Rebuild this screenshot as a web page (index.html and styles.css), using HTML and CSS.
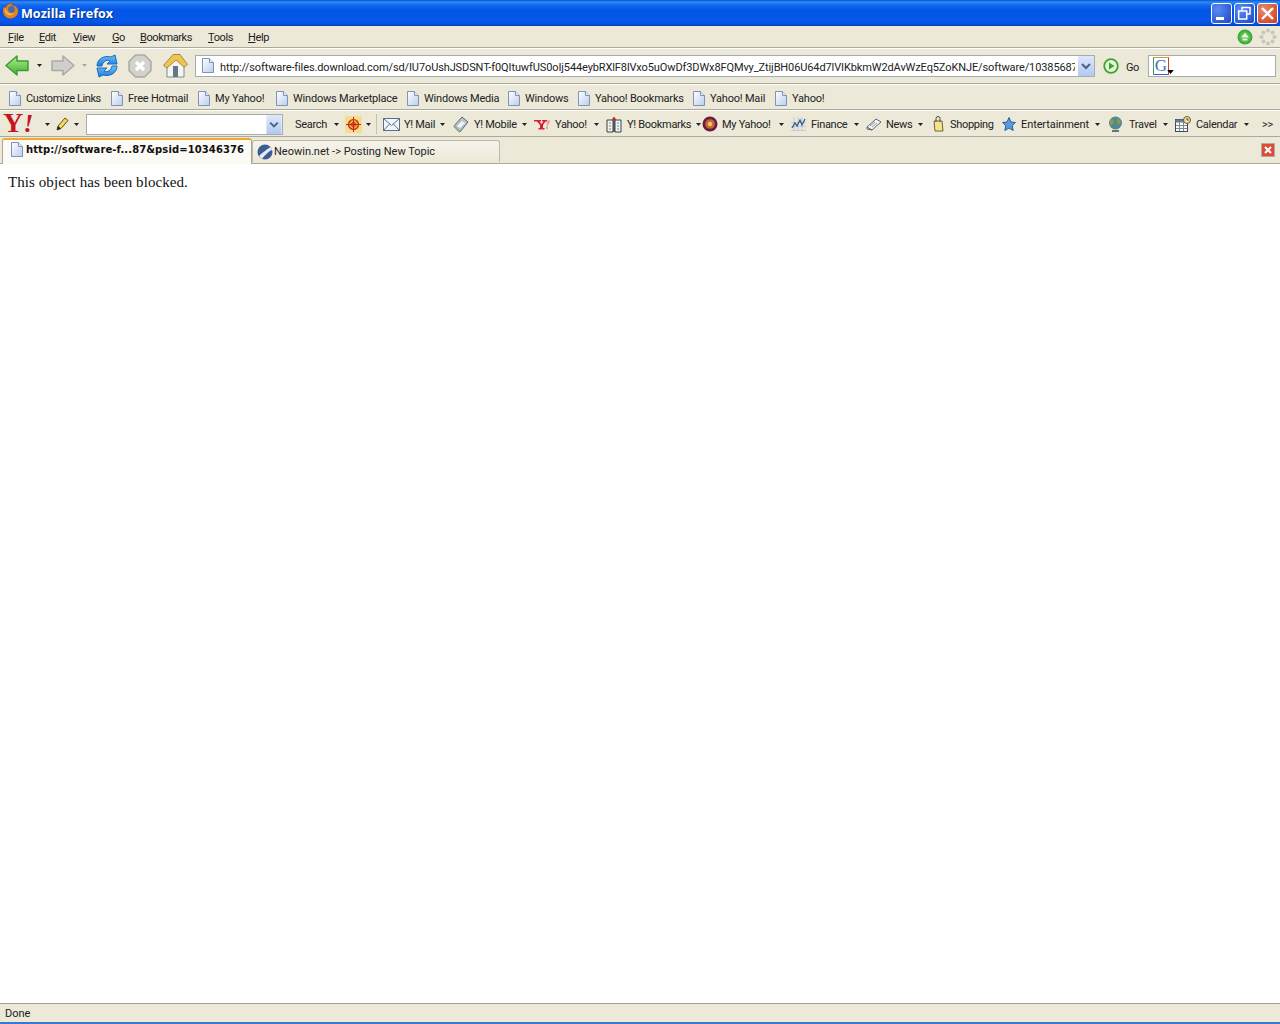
FILE: index.html
```html
<!DOCTYPE html>
<html lang="en">
<head>
<meta charset="utf-8">
<title>Mozilla Firefox</title>
<link rel="stylesheet" href="styles.css">
</head>
<body>
<svg class="defs" width="0" height="0" aria-hidden="true">
  <defs>
    <linearGradient id="pageFill" x1="0" y1="0" x2="1" y2="1"><stop offset="0" stop-color="#fff"/><stop offset="1" stop-color="#bccdec"/></linearGradient>
    <linearGradient id="combo" x1="0" y1="0" x2="0" y2="1"><stop offset="0" stop-color="#dfe8fb"/><stop offset="1" stop-color="#b3c8f0"/></linearGradient>
    <linearGradient id="backFill" x1="0" y1="0" x2="0" y2="1"><stop offset="0" stop-color="#b5f08f"/><stop offset="1" stop-color="#3cb02c"/></linearGradient>
    <linearGradient id="reloadFill" x1="0" y1="0" x2="0" y2="1"><stop offset="0" stop-color="#6cc4fa"/><stop offset="1" stop-color="#1f78d8"/></linearGradient>
    <symbol id="page" viewBox="0 0 13 15">
      <path d="M1.500.5h7l4 4v10h-11z" fill="url(#pageFill)" stroke="#7e93b8"/>
      <path d="M8.500.5v4h4" fill="#e8effb" stroke="#7e93b8"/>
    </symbol>
    <symbol id="caret" viewBox="0 0 5 3"><path d="M0 0h5L2.500 3z"/></symbol>
    <symbol id="combobtn" viewBox="0 0 16 20">
      <rect width="16" height="20" fill="url(#combo)"/>
      <path d="M4 8l4 4 4-4" fill="none" stroke="#4d6185" stroke-width="2"/>
    </symbol>
  </defs>
</svg>

<header class="titlebar">
  <svg class="ff-logo" width="18" height="18" viewBox="0 0 18 18">
    <circle cx="9" cy="8.500" r="7.500" fill="#3d5fa8"/>
    <path d="M2 5c1 1 1.500 1 2 .5C5 2.500 8 1 11 1.500 9.500 2 9 3 9.500 3.500c3-.5 6 1.500 6.500 5 .5 4-3 8-7.500 8C4.500 16.500 1 13 1 9c0-1.500.3-3 1-4z" fill="#e8801c"/>
    <circle cx="9.500" cy="7.500" r="3.400" fill="#4a6ab0"/>
    <path d="M3 6c1 4 4 6 9 5-1 2-4 3-6 2-2-1-4-4-3-7z" fill="#f6b43c"/>
  </svg>
  <span class="title-text">Mozilla Firefox</span>
  <div class="window-buttons">
    <span class="win-btn">
      <svg width="21" height="21" viewBox="0 0 21 21"><rect x="5" y="14" width="8" height="3" fill="#fff"/></svg>
    </span>
    <span class="win-btn">
      <svg width="21" height="21" viewBox="0 0 21 21"><path d="M8 7V4.500h8V11h-3" fill="none" stroke="#fff" stroke-width="1.500"/><rect x="4.700" y="8" width="8" height="8" fill="none" stroke="#fff" stroke-width="1.500"/></svg>
    </span>
    <span class="win-btn win-close">
      <svg width="21" height="21" viewBox="0 0 21 21"><path d="M5 5l11 11M16 5L5 16" stroke="#fff" stroke-width="2.400"/></svg>
    </span>
  </div>
</header>

<nav class="menubar bar">
  <span class="menu-item"><u>F</u>ile</span>
  <span class="menu-item"><u>E</u>dit</span>
  <span class="menu-item"><u>V</u>iew</span>
  <span class="menu-item"><u>G</u>o</span>
  <span class="menu-item"><u>B</u>ookmarks</span>
  <span class="menu-item"><u>T</u>ools</span>
  <span class="menu-item"><u>H</u>elp</span>
  <svg class="update-icon" width="16" height="16" viewBox="0 0 16 16">
    <circle cx="8" cy="8" r="7.500" fill="#3fa83a"/><circle cx="8" cy="8" r="5.800" fill="#52bd48"/>
    <path d="M8 3.500l4 5H4z" fill="#e6f6df"/><rect x="5.500" y="9.500" width="5" height="2" fill="#e6f6df"/>
  </svg>
  <svg class="throbber" width="18" height="18" viewBox="0 0 18 18" fill="#c6c6c0">
    <circle cx="9" cy="2.500" r="2"/><circle cx="13.600" cy="4.400" r="2"/><circle cx="15.500" cy="9" r="2"/><circle cx="13.600" cy="13.600" r="2"/><circle cx="9" cy="15.500" r="2"/><circle cx="4.400" cy="13.600" r="2"/><circle cx="2.500" cy="9" r="2"/><circle cx="4.400" cy="4.400" r="2"/>
  </svg>
</nav>

<div class="navbar bar">
  <svg class="nav-back" width="24" height="24" viewBox="0 0 24 24"><path d="M1 11.500L12 2v5h11v9.500H12V21z" fill="url(#backFill)" stroke="#3f9a38" stroke-width="1.500" stroke-linejoin="round"/></svg>
  <svg class="caret nav-caret1" width="5" height="3"><use href="#caret"/></svg>
  <svg class="nav-forward" width="24" height="24" viewBox="0 0 24 24"><path d="M23 11.500L12 2v5H1v9.500h11V21z" fill="#cfcfcb" stroke="#a9a9a5" stroke-width="1.500" stroke-linejoin="round"/></svg>
  <svg class="caret caret-gray nav-caret2" width="5" height="3"><use href="#caret"/></svg>
  <svg class="nav-reload" width="24" height="24" viewBox="0 0 24 24">
    <path d="M2 12C2 5 9 1 16 3l4-2 2 9H12l3-3c-4-2-7 1-8 5z" fill="url(#reloadFill)" stroke="#1a68c0"/>
    <path d="M22 12c0 7-7 11-14 9l-4 2-2-9h10l-3 3c4 2 7-1 8-5z" fill="url(#reloadFill)" stroke="#1a68c0"/>
  </svg>
  <svg class="nav-stop" width="24" height="24" viewBox="0 0 24 24"><path d="M7.500 1h9L23 7.500v9L16.500 23h-9L1 16.500v-9z" fill="#d2d2ce" stroke="#aaa9a5" stroke-width="1.500"/><path d="M8 8l8 8M16 8l-8 8" stroke="#fff" stroke-width="3.200"/></svg>
  <svg class="nav-home" width="25" height="25" viewBox="0 0 25 25">
    <path d="M4 12l8-7 9 7v12H4z" fill="#f6f5ee" stroke="#7d8797"/>
    <path d="M.5 12.500L10 1.500h7l7.500 10L21 14l-8-7-9 8z" fill="#f0c450" stroke="#8c7a3a" stroke-width=".8"/>
    <rect x="10" y="13" width="5" height="11" fill="#66758e"/>
  </svg>
  <div class="url-box">
    <svg class="page-icon" width="13" height="15"><use href="#page"/></svg>
    <span class="url-text">http://software-files.download.com/sd/IU7oUshJSDSNT-f0QItuwfUS0oIj544eybRXlF8lVxo5uOwDf3DWx8FQMvy_ZtijBH06U64d7lVIKbkmW2dAvWzEq5ZoKNJE/software/10385687</span>
    <svg class="combo-btn" width="16" height="20"><use href="#combobtn"/></svg>
  </div>
  <svg class="go-icon" width="16" height="16" viewBox="0 0 16 16"><circle cx="8" cy="8" r="6.800" fill="#e6f6da" stroke="#3fa32f" stroke-width="1.800"/><path d="M6 4.500L11.500 8 6 11.500z" fill="#3fa32f"/></svg>
  <span class="go-text">Go</span>
  <div class="search-box">
    <span class="g-logo">G</span>
    <svg class="g-caret" width="7" height="4" viewBox="0 0 5 3"><path d="M0 0h5L2.500 3z"/></svg>
  </div>
</div>

<div class="linksbar bar">
  <span class="link-item link-tight"><svg width="13" height="15"><use href="#page"/></svg>Customize Links</span>
  <span class="link-item"><svg width="13" height="15"><use href="#page"/></svg>Free Hotmail</span>
  <span class="link-item"><svg width="13" height="15"><use href="#page"/></svg>My Yahoo!</span>
  <span class="link-item"><svg width="13" height="15"><use href="#page"/></svg>Windows Marketplace</span>
  <span class="link-item"><svg width="13" height="15"><use href="#page"/></svg>Windows Media</span>
  <span class="link-item"><svg width="13" height="15"><use href="#page"/></svg>Windows</span>
  <span class="link-item"><svg width="13" height="15"><use href="#page"/></svg>Yahoo! Bookmarks</span>
  <span class="link-item"><svg width="13" height="15"><use href="#page"/></svg>Yahoo! Mail</span>
  <span class="link-item"><svg width="13" height="15"><use href="#page"/></svg>Yahoo!</span>
</div>

<div class="yahoobar bar">
  <span class="y-logo">Y<i>!</i></span>
  <svg class="caret yc-1" width="5" height="3"><use href="#caret"/></svg>
  <svg class="y-pencil" width="13" height="14" viewBox="0 0 13 14"><path d="M1 13l1-4 7-8 3 2.500-7 8z" fill="#f4d84e" stroke="#55503a"/><path d="M1 13l1-4 3 2.500z" fill="#222"/></svg>
  <svg class="caret yc-2" width="5" height="3"><use href="#caret"/></svg>
  <div class="y-input"><svg class="combo-btn" width="16" height="19"><use href="#combobtn"/></svg></div>
  <span class="y-item y-search">Search<svg class="caret" width="5" height="3"><use href="#caret"/></svg></span>
  <svg class="y-target" width="17" height="17" viewBox="0 0 17 17"><rect width="17" height="17" fill="#f6dc8e"/><circle cx="8.500" cy="8.500" r="5" fill="#f4a53a" stroke="#c22818" stroke-width="1.200"/><circle cx="8.500" cy="8.500" r="2" fill="none" stroke="#c22818"/><path d="M8.500 1v15M1 8.500h15" stroke="#c22818"/></svg>
  <svg class="caret yc-3" width="5" height="3"><use href="#caret"/></svg>
  <span class="y-sep"></span>
  <span class="y-item i-mail">
    <svg width="17" height="13" viewBox="0 0 17 13"><rect x=".5" y=".5" width="16" height="12" fill="#f2f6fb" stroke="#59708f"/><path d="M.5.500l8 7 8-7M.5 12.500l6-6.500M16.500 12.500l-6-6.500" fill="none" stroke="#59708f"/></svg>
    Y! Mail<svg class="caret" width="5" height="3"><use href="#caret"/></svg></span>
  <span class="y-item i-mobile">
    <svg width="16" height="17" viewBox="0 0 16 17"><path d="M1 10l8-9 6 5-8 10z" fill="#b9c2cc" stroke="#5c6672"/><path d="M4 10l5-5 3 2-5 5z" fill="#eef3f8"/><path d="M1 10l6 6" stroke="#8fa88a" stroke-width="2"/></svg>
    Y! Mobile<svg class="caret" width="5" height="3"><use href="#caret"/></svg></span>
  <span class="y-item i-yahoo">
    <svg width="17" height="11" viewBox="0 0 17 11"><path d="M0 1h7v1.500H5.500L7.500 5 9.500 2.500H8V1h5v1.500h-1.500L9 6v3h1.500v1.500h-6V9H6V6L3 2.500H0z" fill="#d8202c"/><path d="M13 1.500h3.500L14 6.500h-1.500zM12 7.500h2v2.500h-2z" fill="#e8a0a0"/></svg>
    Yahoo!<svg class="caret" width="5" height="3"><use href="#caret"/></svg></span>
  <span class="y-item i-book">
    <svg width="16" height="17" viewBox="0 0 16 17"><path d="M1 4h6v12H1zM9 4h6v12H9z" fill="#f2f2ea" stroke="#36424e"/><path d="M8 3v13" stroke="#36424e" stroke-width="1.500"/><path d="M5.500 4L8 .5 10.500 4z" fill="#c03020"/><path d="M3 7h2M3 10h2M3 13h2M11 7h2M11 10h2M11 13h2" stroke="#7e8a96"/></svg>
    Y! Bookmarks<svg class="caret" width="5" height="3"><use href="#caret"/></svg></span>
  <span class="y-item i-my">
    <svg width="16" height="16" viewBox="0 0 16 16"><circle cx="8" cy="8" r="7.500" fill="#6a1a44"/><circle cx="8" cy="8" r="4.800" fill="#c96a2c"/><circle cx="8" cy="8" r="2.200" fill="#f0c46a"/></svg>
    My Yahoo!<svg class="caret" width="5" height="3"><use href="#caret"/></svg></span>
  <span class="y-item i-finance">
    <svg width="15" height="14" viewBox="0 0 15 14"><path d="M0 13.500h15M0 9.500h15M0 5.500h15M3 0v14M7 0v14M11 0v14" stroke="#b7c7dc" stroke-width=".8"/><path d="M1 11l3-5 2 3 3-6 2 5 3-6" fill="none" stroke="#2e5a96" stroke-width="1.300"/></svg>
    Finance<svg class="caret" width="5" height="3"><use href="#caret"/></svg></span>
  <span class="y-item i-news">
    <svg width="16" height="13" viewBox="0 0 16 13"><path d="M1 9l9-8 5 3-9 8z" fill="#f5f5f2" stroke="#5c6672"/><path d="M4 8l5-4M6 9l5-4" stroke="#8b949c"/><path d="M1 9v2l5 1" fill="none" stroke="#5c6672"/></svg>
    News<svg class="caret" width="5" height="3"><use href="#caret"/></svg></span>
  <span class="y-item i-shop">
    <svg width="13" height="16" viewBox="0 0 13 16"><path d="M2 5h8l1 10H3z" fill="#f2e58a" stroke="#6a6538"/><path d="M4 6V2.500a2 2 0 0 1 4 0V6" fill="none" stroke="#4a4a3a"/></svg>
    Shopping</span>
  <span class="y-item i-star">
    <svg width="14" height="14" viewBox="0 0 14 14"><path d="M7 .5l2 4.500 4.500.5-3.300 3 1 5L7 11l-4.200 2.500 1-5-3.300-3L5 5z" fill="#5a9ae0" stroke="#2c5c9c"/></svg>
    Entertainment<svg class="caret" width="5" height="3"><use href="#caret"/></svg></span>
  <span class="y-item i-travel">
    <svg width="15" height="16" viewBox="0 0 15 16"><circle cx="7.500" cy="7" r="6.500" fill="#4f8a90"/><path d="M3 3c2 0 3 1 3 3s-2 1-3 4c-1-2-2-5 0-7zM9 2c2 1 4 3 4 5l-3 2-1-3z" fill="#8a9a50"/><path d="M4 15h7" stroke="#4a4a4a" stroke-width="1.500"/></svg>
    Travel<svg class="caret" width="5" height="3"><use href="#caret"/></svg></span>
  <span class="y-item i-cal">
    <svg width="16" height="16" viewBox="0 0 16 16"><rect x=".5" y="3.500" width="12" height="12" fill="#fbfbf6" stroke="#3d4a5c"/><rect x=".5" y="3.500" width="12" height="3" fill="#6a7c96"/><path d="M4.500 6v9M8.500 6v9M1 9.500h11M1 12.500h11" stroke="#7c8899"/><circle cx="12" cy="4" r="3.500" fill="#f0dfa0" stroke="#6a5a2c"/><path d="M12 2v2h2" fill="none" stroke="#333" stroke-width=".8"/></svg>
    Calendar<svg class="caret" width="5" height="3"><use href="#caret"/></svg></span>
  <span class="y-more">&gt;&gt;</span>
</div>

<div class="tabbar">
  <div class="tab tab-active"><svg width="13" height="15"><use href="#page"/></svg><span>http://software-f...87&amp;psid=10346376</span></div>
  <div class="tab tab-idle">
    <svg width="16" height="16" viewBox="0 0 16 16"><circle cx="8" cy="8" r="7.500" fill="#3c5c94"/><path d="M2 12C5 9 10 5 14 3c.5 1 1 2 1 3-3 1-7 5-10 9-1-.5-2-2-3-3z" fill="#e4ebf5"/></svg>
    <span>Neowin.net -&gt; Posting New Topic</span>
  </div>
  <span class="spring"></span>
  <span class="tab-close"><svg width="14" height="14" viewBox="0 0 14 14"><rect x=".5" y=".5" width="13" height="13" fill="#dc4c38" stroke="#b8a8a0"/><path d="M4 4l6 6M10 4l-6 6" stroke="#fff" stroke-width="2"/></svg></span>
</div>

<main class="content">
  <p class="blocked">This object has been blocked.</p>
</main>

<footer class="statusbar">Done</footer>
</body>
</html>
```

FILE: styles.css
```css
* { box-sizing: border-box; }
html, body { height: 100%; }
body {
  margin: 0;
  display: flex;
  flex-direction: column;
  overflow: hidden;
  background: #fff;
  color: #222;
  font: 11px Roboto, "Liberation Sans", sans-serif;
}
.defs { position: absolute; }
.spring { flex: 1; }
svg { display: block; flex: none; }

.titlebar {
  flex: none;
  height: 26px;
  display: flex;
  align-items: center;
  padding: 0 2px 0 2px;
  background: linear-gradient(#0a4fd0 0, #2d8cf5 2px, #1268ee 5px, #0456e6 10px, #0558ea 21px, #0350dc 24px, #0040c0 26px);
}
.ff-logo { margin-top: -4px; }
.title-text {
  margin-left: 1px;
  color: #fff;
  font: bold 12.6px "Open Sans", "Noto Sans", sans-serif;
  text-shadow: 1px 1px 1px #0a2f90;
}
.window-buttons { margin-left: auto; display: flex; gap: 2px; }
.win-btn {
  width: 21px;
  height: 21px;
  border: 1px solid #fff;
  border-radius: 3px;
  background: radial-gradient(circle at 30% 30%, #5c8cf0, #2c5cd8 70%, #2248c0);
  display: flex;
  align-items: center;
  justify-content: center;
}
.win-btn svg { margin: -1px; }
.win-close { background: radial-gradient(circle at 30% 30%, #e88a70, #d8512e 70%, #c03a20); }

.bar {
  flex: none;
  background: #ece9d8;
  border-bottom: 1px solid #aca899;
  box-shadow: inset 0 1px 0 #fff;
  align-items: center;
}

.menubar {
  display: grid;
  height: 22px;
  padding: 0 3px 0 8px;
  grid-template-columns: 31px 34px 39px 28px 68px 40px 1fr 22px 18px;
  box-shadow: none;
}
.menu-item { padding-top: 2px; letter-spacing: -.4px; }
.menu-item u { text-underline-offset: 1px; }
.update-icon { justify-self: start; grid-column: 8; }
.throbber { grid-column: 9; }

.navbar { display: flex; height: 36px; padding: 0 4px 0 5px; }
.caret { fill: #222; }
.caret-gray { fill: #aaa; }
.nav-caret1 { margin-left: 8px; }
.nav-forward { margin-left: 9px; }
.nav-caret2 { margin-left: 7px; }
.nav-reload { margin-left: 8px; }
.nav-stop { margin-left: 9px; }
.nav-home { margin-left: 11px; }
.url-box {
  flex: none;
  margin-left: 7px;
  width: 900px;
  height: 22px;
  display: flex;
  align-items: center;
  background: #fff;
  border: 1px solid #a5acb2;
  padding-left: 5px;
}
.url-text {
  padding-top: 3px;
  margin-left: 6px;
  width: 855px;
  white-space: nowrap;
  overflow: hidden;
  letter-spacing: -.11px;
}
.combo-btn { margin-left: auto; }
.go-icon { margin-left: 8px; }
.go-text { margin: 3px 0 0 7px; letter-spacing: -.4px; }
.search-box {
  position: relative;
  margin-left: auto;
  flex: none;
  width: 128px;
  height: 22px;
  background: #fff;
  border: 1px solid #a5acb2;
}
.g-logo {
  position: absolute;
  left: 4px;
  top: 1px;
  width: 16px;
  height: 18px;
  border: 1px solid #3a9a6a;
  border-top-color: #c8a040;
  border-right-color: #c84030;
  border-bottom-color: #3a62b0;
  text-align: center;
  color: #3a72c0;
  font: 17px/16px "Liberation Serif", serif;
}
.g-caret { position: absolute; left: 18px; top: 14px; }

.linksbar {
  display: grid;
  height: 26px;
  padding: 3px 0 0 8px;
  grid-template-columns: 102px 87px 78px 131px 101px 70px 115px 82px auto;
  justify-content: start;
  letter-spacing: -.2px;
}
.link-item { display: flex; align-items: center; gap: 5px; }
.link-tight { letter-spacing: -.4px; }

.yahoobar { display: flex; height: 27px; padding: 2px 0 0 3px; letter-spacing: -.3px; }
.y-logo {
  flex: none;
  width: 33px;
  margin-top: -2px;
  color: #c8141e;
  letter-spacing: 0;
  font: bold 28px/1 "Liberation Serif", serif;
}
.y-logo i { font-size: 26px; }
.yc-1 { margin-left: 9px; }
.y-pencil { margin-left: 6px; }
.yc-2 { margin-left: 5px; }
.y-input {
  flex: none;
  margin-left: 7px;
  width: 197px;
  height: 21px;
  background: #fff;
  border: 1px solid #a5acb2;
  display: flex;
}
.y-item {
  flex: none;
  display: flex;
  align-items: center;
  gap: 4px;
  padding-right: 7px;
  white-space: nowrap;
}
.y-item .caret { margin-left: auto; }
.y-search { width: 50px; margin-left: 12px; padding-right: 6px; }
.yc-3 { margin-left: 4px; }
.y-sep { flex: none; width: 1px; height: 20px; background: #c4c2b4; margin-left: 5px; margin-right: 6px; }
.i-mail { width: 70px; padding-right: 8px; }
.i-mobile { width: 81px; gap: 5px; }
.i-yahoo { width: 72px; }
.i-book { width: 96px; gap: 5px; padding-right: 6px; }
.i-my { width: 89px; }
.i-finance { width: 75px; gap: 5px; }
.i-news { width: 66px; padding-right: 9px; }
.i-shop { width: 70px; gap: 5px; }
.i-star { width: 106px; gap: 5px; padding-right: 8px; letter-spacing: -.1px; }
.i-travel { width: 67px; gap: 6px; }
.i-cal { width: 87px; gap: 5px; padding-right: 13px; }
.y-more { flex: none; }

.tabbar {
  flex: none;
  height: 27px;
  display: flex;
  align-items: flex-end;
  padding-left: 2px;
  background: #ece9d8;
  border-bottom: 1px solid #aca899;
}
.tab { display: flex; align-items: center; white-space: nowrap; }
.tab-active {
  width: 250px;
  height: 26px;
  margin-bottom: -1px;
  padding: 0 0 5px 7px;
  gap: 3px;
  background: #fbfaf4;
  border: 1px solid #aca899;
  border-bottom: 0;
  border-top: 2px solid #f0a830;
  border-radius: 3px 3px 0 0;
  color: #111;
  font: bold 10px "DejaVu Sans", sans-serif;
  letter-spacing: .1px;
}
.tab-idle {
  width: 248px;
  height: 22px;
  margin-bottom: 1px;
  padding-left: 4px;
  gap: 1px;
  background: linear-gradient(#f6f4ea, #ece9d8);
  border: 1px solid #bcb9a8;
  border-bottom: 0;
  border-radius: 3px 3px 0 0;
}
.tab-close { align-self: center; margin-right: 5px; }

.content { flex: 1; min-height: 0; background: #fff; }
.blocked {
  margin: 9px 8px;
  color: #111;
  font: 15px/18px "Liberation Serif", serif;
  letter-spacing: .07px;
}

.statusbar {
  flex: none;
  height: 21px;
  padding: 1px 0 0 5px;
  line-height: 17px;
  background: #ece9d8;
  border-top: 1px solid #a5a294;
  border-bottom: 2px solid #3b77d0;
}
```
